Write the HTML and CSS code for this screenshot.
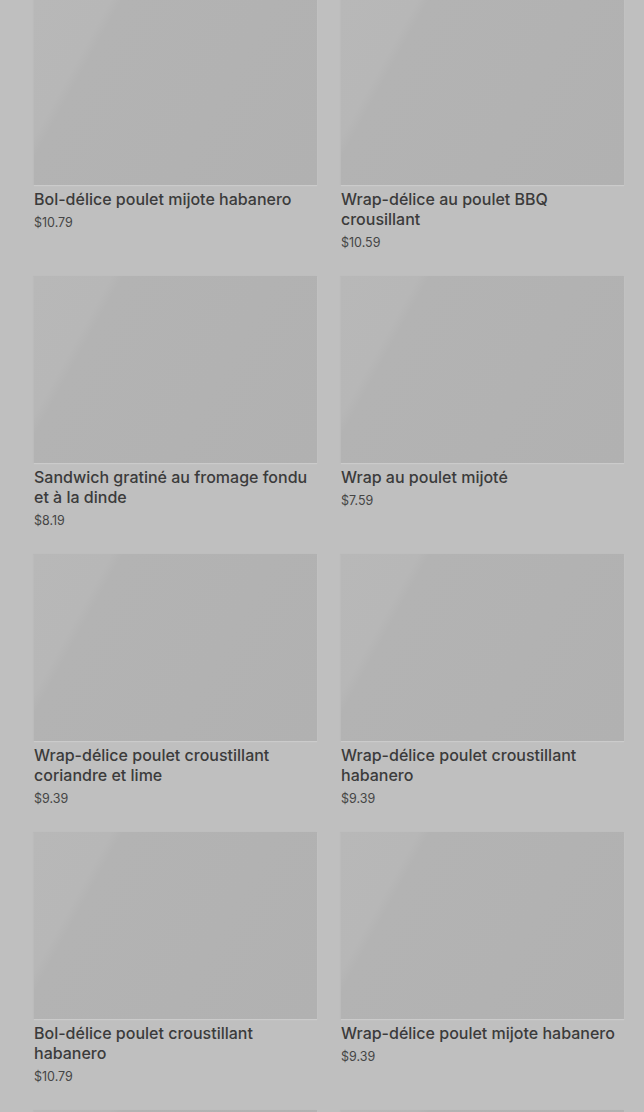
FILE: index.html
```html
<!DOCTYPE html>
<html>
<head>
    <title>Menu</title>
    <link rel="stylesheet" href="styles.css">
</head>
<body>
    <div class="menu-grid">
        <div class="card">
            <div class="card-image"></div>
            <div class="card-title">Bol-délice poulet mijote habanero</div>
            <div class="card-price">$10.79</div>
        </div>
        <div class="card">
            <div class="card-image"></div>
            <div class="card-title">Wrap-délice au poulet BBQ crousillant</div>
            <div class="card-price">$10.59</div>
        </div>
        <div class="card">
            <div class="card-image"></div>
            <div class="card-title">Sandwich gratiné au fromage fondu et à la dinde</div>
            <div class="card-price">$8.19</div>
        </div>
        <div class="card">
            <div class="card-image"></div>
            <div class="card-title">Wrap au poulet mijoté</div>
            <div class="card-price">$7.59</div>
        </div>
        <div class="card">
            <div class="card-image"></div>
            <div class="card-title">Wrap-délice poulet croustillant coriandre et lime</div>
            <div class="card-price">$9.39</div>
        </div>
        <div class="card">
            <div class="card-image"></div>
            <div class="card-title">Wrap-délice poulet croustillant habanero</div>
            <div class="card-price">$9.39</div>
        </div>
        <div class="card">
            <div class="card-image"></div>
            <div class="card-title">Bol-délice poulet croustillant habanero</div>
            <div class="card-price">$10.79</div>
        </div>
        <div class="card">
            <div class="card-image"></div>
            <div class="card-title">Wrap-délice poulet mijote habanero</div>
            <div class="card-price">$9.39</div>
        </div>
        <div class="card">
            <div class="card-image"></div>
        </div>
        <div class="card">
            <div class="card-image"></div>
        </div>
    </div>
</body>
</html>
```

FILE: styles.css
```css
body {
    margin: 0;
    padding: 0;
    background: #bfbfbf;
    font-family: Inter, "Liberation Sans", sans-serif;
    overflow: hidden;
}

.menu-grid {
    display: grid;
    grid-template-columns: 283px 283px;
    grid-auto-rows: 254px;
    column-gap: 24px;
    row-gap: 24px;
    padding: 0 20px 0 34px;
    margin-top: -2px;
}

.card-image {
    height: 187px;
    background: linear-gradient(119deg, #b8b8b8 0%, #b7b7b7 20%, #b3b3b3 23%, #b1b1b1 100%);
    box-shadow: 0 1px 1px rgba(255, 255, 255, 0.2), -1px 0 1px rgba(0, 0, 0, 0.03);
}

.card-title {
    margin-top: 4px;
    font-size: 16px;
    font-weight: 500;
    line-height: 20px;
    color: #3b3b3b;
}

.card-price {
    margin-top: 5px;
    font-size: 12.5px;
    line-height: 18px;
    color: #454545;
}
```
